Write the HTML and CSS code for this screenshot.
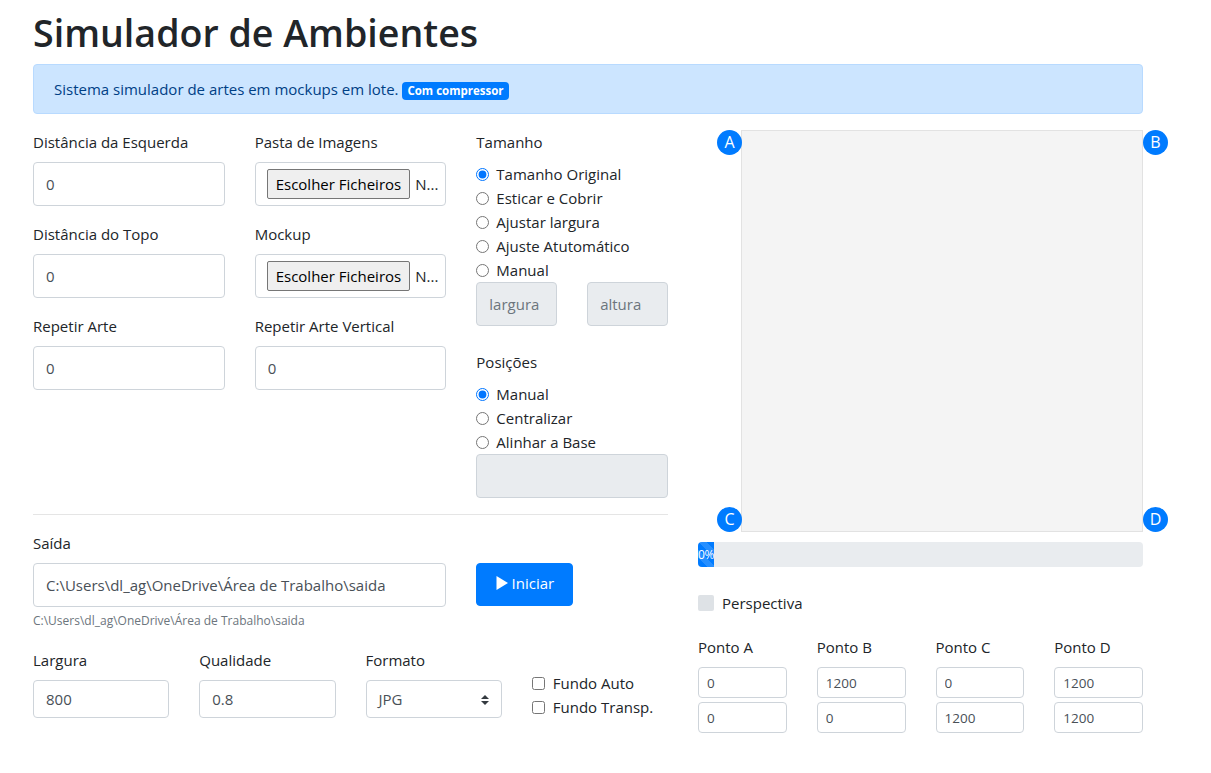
FILE: index.html
```html
<!DOCTYPE html>
<html lang="pt">
<head>
<meta charset="utf-8">
<title>Simulador de Ambientes</title>
<link rel="stylesheet" href="styles.css">
</head>
<body>
<div class="container">
  <h1 class="title">Simulador de Ambientes</h1>
  <div class="alert">Sistema simulador de artes em mockups em lote. <span class="badge">Com compressor</span></div>

  <div class="main">
    <div class="left">
      <div class="grid3">
        <div class="col">
          <div class="group"><label class="lbl">Distância da Esquerda</label><input class="fc" value="0"></div>
          <div class="group"><label class="lbl">Distância do Topo</label><input class="fc" value="0"></div>
          <div class="group"><label class="lbl">Repetir Arte</label><input class="fc" value="0"></div>
        </div>
        <div class="col">
          <div class="group"><label class="lbl">Pasta de Imagens</label><div class="fc file"><span class="file-btn">Escolher Ficheiros</span><span class="file-name">N...</span></div></div>
          <div class="group"><label class="lbl">Mockup</label><div class="fc file"><span class="file-btn">Escolher Ficheiros</span><span class="file-name">N...</span></div></div>
          <div class="group"><label class="lbl">Repetir Arte Vertical</label><input class="fc" value="0"></div>
        </div>
        <div class="col">
          <div class="lbl">Tamanho</div>
          <label class="check"><input type="radio" name="tam" checked><span>Tamanho Original</span></label>
          <label class="check"><input type="radio" name="tam"><span>Esticar e Cobrir</span></label>
          <label class="check"><input type="radio" name="tam"><span>Ajustar largura</span></label>
          <label class="check"><input type="radio" name="tam"><span>Ajuste Atutomático</span></label>
          <label class="check"><input type="radio" name="tam"><span>Manual</span></label>
          <div class="pair">
            <input class="fc" placeholder="largura" disabled>
            <input class="fc" placeholder="altura" disabled>
          </div>
          <div class="lbl pos-lbl">Posições</div>
          <label class="check"><input type="radio" name="pos" checked><span>Manual</span></label>
          <label class="check"><input type="radio" name="pos"><span>Centralizar</span></label>
          <label class="check"><input type="radio" name="pos"><span>Alinhar a Base</span></label>
          <input class="fc last" disabled>
        </div>
      </div>

      <hr class="sep">

      <div class="grid3">
        <div class="group span2">
          <label class="lbl">Saída</label>
          <input class="fc" value="C:\Users\dl_ag\OneDrive\Área de Trabalho\saida">
          <small class="hint">C:\Users\dl_ag\OneDrive\Área de Trabalho\saida</small>
        </div>
        <div class="btn-col">
          <button class="btn-primary" type="button">
            <svg class="play" width="12" height="14" viewBox="0 0 12 14"><path d="M0.5 0 L12 7 L0.5 14 Z" fill="#fff"/></svg>
            <span>Iniciar</span>
          </button>
        </div>
      </div>

      <div class="grid4">
        <div><label class="lbl">Largura</label><input class="fc fc-md" value="800"></div>
        <div><label class="lbl">Qualidade</label><input class="fc fc-md" value="0.8"></div>
        <div>
          <label class="lbl">Formato</label>
          <div class="select">
            <span>JPG</span>
            <svg class="arrows" width="8" height="10" viewBox="0 0 4 5"><path d="M2 0L0 2h4zm0 5L0 3h4z" fill="#343a40"/></svg>
          </div>
        </div>
        <div class="checks">
          <label class="check cb"><input type="checkbox"><span>Fundo Auto</span></label>
          <label class="check cb"><input type="checkbox"><span>Fundo Transp.</span></label>
        </div>
      </div>
    </div>

    <div class="right">
      <div class="canvas-area">
        <div class="canvas"></div>
        <span class="handle h-a">A</span>
        <span class="handle h-b">B</span>
        <span class="handle h-c">C</span>
        <span class="handle h-d">D</span>
      </div>
      <div class="progress"><div class="bar" style="width:16px">0%</div></div>
      <div class="persp"><span class="box"></span><span>Perspectiva</span></div>
      <div class="pontos">
        <div><div class="lbl">Ponto A</div><input class="fc fc-sm" value="0"><input class="fc fc-sm" value="0"></div>
        <div><div class="lbl">Ponto B</div><input class="fc fc-sm" value="1200"><input class="fc fc-sm" value="0"></div>
        <div><div class="lbl">Ponto C</div><input class="fc fc-sm" value="0"><input class="fc fc-sm" value="1200"></div>
        <div><div class="lbl">Ponto D</div><input class="fc fc-sm" value="1200"><input class="fc fc-sm" value="1200"></div>
      </div>
    </div>
  </div>
</div>
</body>
</html>
```

FILE: styles.css
```css
* { box-sizing: border-box; }
body {
  margin: 0;
  font-family: "Open Sans", "Noto Sans", "Liberation Sans", sans-serif;
  font-size: 15px;
  line-height: 24px;
  color: #212529;
  background: #fff;
}
.container {
  width: 1143px;
  padding: 9px 0 0 33px;
}
.title {
  font-size: 37.6px;
  font-weight: 600;
  line-height: 47px;
  margin: 0 0 8px;
}
.alert {
  height: 50px;
  padding: 12px 20px;
  border: 1px solid #b8daff;
  background: #cce5ff;
  color: #004085;
  border-radius: 4px;
  margin-bottom: 16px;
}
.badge {
  display: inline-block;
  background: #007bff;
  color: #fff;
  font-size: 11.5px;
  font-weight: 700;
  line-height: 1;
  padding: 3px 5px;
  border-radius: 4px;
}
.main {
  display: grid;
  grid-template-columns: 635px 445px;
  column-gap: 30px;
}
.grid3 {
  display: grid;
  grid-template-columns: repeat(3, minmax(0, 1fr));
  column-gap: 30px;
}
.group { margin-bottom: 16px; }
.lbl {
  display: block;
  margin-bottom: 8px;
}
.fc {
  display: block;
  width: 100%;
  height: 44px;
  padding: 0 12px;
  font: inherit;
  color: #495057;
  background: #fff;
  border: 1px solid #ced4da;
  border-radius: 4px;
}
.fc:disabled { background: #e9ecef; }
.fc::placeholder { color: #6c757d; }
.file {
  display: flex;
  align-items: center;
  gap: 5px;
  padding: 0 11px;
  overflow: hidden;
  white-space: nowrap;
}
.file-btn {
  height: 30px;
  line-height: 28px;
  padding: 0 8px;
  color: #000;
  background: #efefef;
  border: 1px solid #767676;
  border-radius: 2px;
  flex: none;
}
.file-name { color: #212529; }

.check {
  display: flex;
  align-items: center;
  height: 24px;
  gap: 7px;
}
.check input {
  margin: 0;
  width: 13px;
  height: 13px;
  flex: none;
}
.pair {
  display: grid;
  grid-template-columns: minmax(0, 1fr) minmax(0, 1fr);
  column-gap: 30px;
}
.pos-lbl { margin-top: 24px; }
.fc.last { margin-bottom: 16px; }

.sep {
  margin: 0 0 16px;
  border: 0;
  border-top: 1px solid rgba(0,0,0,.1);
}
.span2 { grid-column: span 2; }
.hint {
  display: block;
  margin-top: 4px;
  font-size: 12px;
  color: #6c757d;
  line-height: 19px;
  margin-bottom: 2px;
}
.btn-col { padding-top: 32px; }
.btn-primary {
  display: flex;
  align-items: center;
  justify-content: center;
  gap: 4px;
  width: 97px;
  height: 43px;
  padding: 0 12px 3px;
  font: inherit;
  color: #fff;
  background: #007bff;
  border: 1px solid #007bff;
  border-radius: 4px;
}

.grid4 {
  display: grid;
  grid-template-columns: repeat(4, minmax(0, 1fr));
  column-gap: 30px;
}
.fc-md { height: 38px; }
.select {
  position: relative;
  height: 38px;
  display: flex;
  align-items: center;
  padding: 0 28px 0 12px;
  color: #495057;
  border: 1px solid #ced4da;
  border-radius: 4px;
  background: #fff;
}
.arrows {
  position: absolute;
  right: 12px;
  top: 14px;
}
.checks { padding-top: 23px; }
.check.cb { gap: 8px; }

.canvas-area {
  position: relative;
  height: 402px;
  display: flex;
  justify-content: flex-end;
}
.canvas {
  width: 402px;
  height: 402px;
  background: #f4f4f4;
  border: 1px solid #e2e2e2;
}
.handle {
  position: absolute;
  width: 25px;
  height: 25px;
  border-radius: 50%;
  background: #007bff;
  color: #fff;
  font-size: 16px;
  line-height: 25px;
  text-align: center;
}
.h-a { left: 19px; top: 0; }
.h-b { left: 445px; top: 0; }
.h-c { left: 19px; top: 377px; }
.h-d { left: 445px; top: 377px; }

.progress {
  margin-top: 10px;
  height: 25px;
  background: #e9ecef;
  border-radius: 4px;
  overflow: hidden;
  display: flex;
}
.bar {
  background-color: #007bff;
  background-image: linear-gradient(45deg, rgba(255,255,255,.15) 25%, transparent 25%, transparent 50%, rgba(255,255,255,.15) 50%, rgba(255,255,255,.15) 75%, transparent 75%, transparent);
  background-size: 16px 16px;
  color: #fff;
  font-size: 12px;
  line-height: 25px;
  text-align: center;
  white-space: nowrap;
  display: flex;
  justify-content: center;
  letter-spacing: -0.5px;
}
.persp {
  margin-top: 24px;
  display: flex;
  align-items: center;
  gap: 8px;
  height: 24px;
}
.persp .box {
  width: 16px;
  height: 16px;
  background: #dee2e6;
  border-radius: 2px;
}
.pontos {
  margin-top: 20px;
  display: grid;
  grid-template-columns: repeat(4, minmax(0, 1fr));
  column-gap: 30px;
}
.fc-sm {
  height: 31px;
  font-size: 13.5px;
  padding: 0 8px;
  margin-bottom: 4px;
}
```
